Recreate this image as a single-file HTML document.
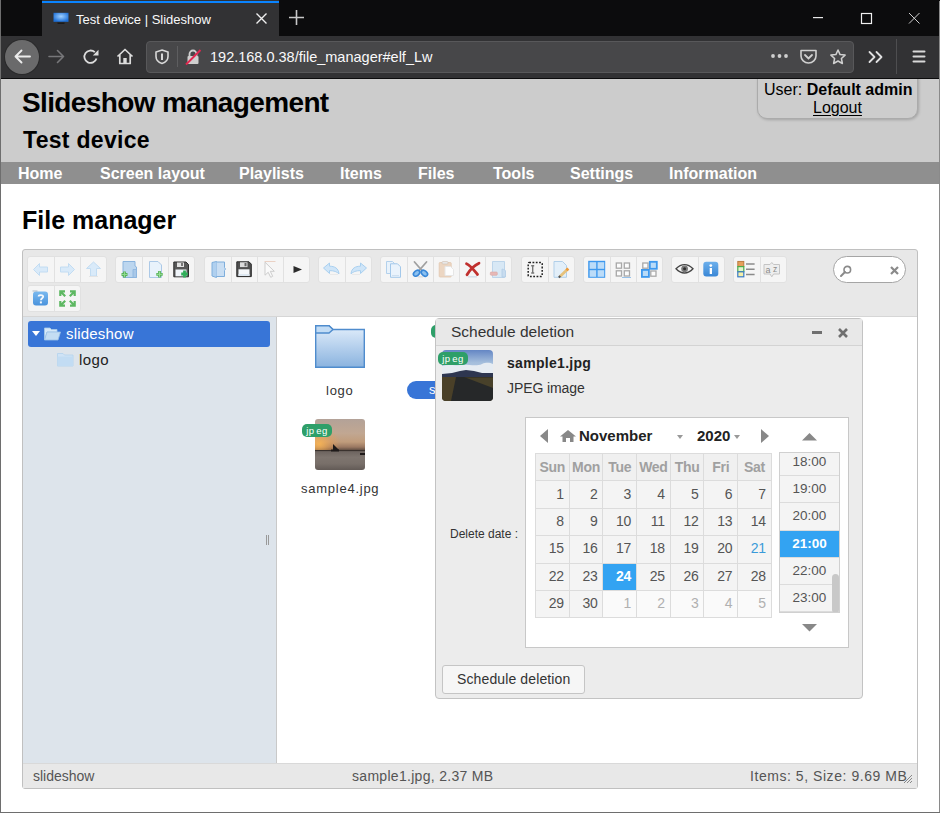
<!DOCTYPE html>
<html><head><meta charset="utf-8">
<style>
*{box-sizing:border-box;}
html,body{margin:0;padding:0;width:940px;height:813px;overflow:hidden;background:#fff;font-family:"Liberation Sans",sans-serif;}
.a{position:absolute;}
svg{position:absolute;overflow:visible;}
#titlebar{left:0;top:0;width:940px;height:36px;background:#0c0c0d;}
#tab{left:42px;top:0;width:237px;height:36px;background:#323234;}
#tabline{left:42px;top:1px;width:237px;height:2px;background:#0a84ff;}
#toolbar{left:0;top:36px;width:940px;height:42px;background:#323234;}
#tbline{left:0;top:78px;width:940px;height:1px;background:#0c0c0d;}
#urlbar{left:146px;top:41px;width:708px;height:32px;background:#474749;border:1px solid #58585a;border-radius:4px;}
.wb{width:1px;background:#6e6e6e;}
#hdr{left:1px;top:79px;width:938px;height:83px;background:#cccccc;}
#nav{left:1px;top:162px;width:938px;height:22px;background:#8f8f8f;}
.nv{position:absolute;top:163px;height:22px;line-height:22px;color:#fff;font-weight:bold;font-size:16px;}
/* elfinder */
#elf{left:22px;top:249px;width:896px;height:540px;border:1px solid #c0c0c0;border-radius:3px;background:#e8e8e8;overflow:hidden;}
#tree{left:23px;top:317px;width:253px;height:446px;background:#dde4eb;}
#tbb{left:23px;top:316px;width:894px;height:1px;background:#d6d6d6;}
#cwd{left:277px;top:317px;width:640px;height:446px;background:#fff;}
#divl{left:276px;top:317px;width:1px;height:446px;background:#c9c9c9;}
#stat{left:23px;top:763px;width:894px;height:25px;background:#e8e8e8;border-top:1px solid #d9d9d9;}
.bs{position:absolute;top:256px;height:27px;background:#f5f5f5;border-radius:3px;border:1px solid #e1e1e1;display:flex;}
.bt{width:26px;height:25px;position:relative;}
.bt+.bt{border-left:1px solid #e1e1e1;}
.bt svg{left:5px;top:4px;}
.bt+.bt svg{left:4px;}
.st{position:absolute;top:768px;font-size:14px;color:#555;line-height:16px;white-space:nowrap;}
/* dialog */
#dlg{left:435px;top:318px;width:428px;height:381px;border:1px solid #c3c3c3;border-radius:4px;background:#ececec;overflow:hidden;}
#dlgh{left:436px;top:319px;width:426px;height:27px;background:#e8e8e8;border-bottom:1px solid #d3d3d3;}
#pick{left:525px;top:417px;width:324px;height:231px;background:#fff;border:1px solid #c8c8c8;}
.cal{position:absolute;left:535px;top:453px;border-collapse:collapse;}
.cal td{border:1px solid #dcdcdc;width:33.7px;height:27.4px;padding:0 5px 2px 0;text-align:right;font-size:14px;letter-spacing:-0.3px;color:#555;background:#f4f4f4;line-height:16px;}
.cal tr.h td{color:#a0a0a0;font-weight:bold;background:#f0f0f0;text-align:center;padding:0 0 1px 0;}
.cal td.o{background:#fafafa;color:#b0b0b0;}
.cal td.sel{background:#33a3f2;color:#fff;font-weight:bold;}
.tr{height:27.2px;border-bottom:1px solid #dcdcdc;background:#f4f4f4;text-align:center;font-size:13.5px;color:#555;line-height:26px;}
.tr.sel{background:#33a3f2;color:#fff;font-weight:bold;}
</style></head>
<body>
<!-- browser chrome -->
<div class="a" id="titlebar"></div>
<div class="a" id="tab"></div>
<div class="a" id="tabline"></div>
<svg style="left:53px;top:12px" width="16" height="13" viewBox="0 0 16 13"><defs><radialGradient id="mon" cx="0.5" cy="0.4" r="0.6"><stop offset="0" stop-color="#9fd0ff"/><stop offset="1" stop-color="#1d6fd6"/></radialGradient></defs><rect x="0.5" y="0.8" width="15" height="9" fill="url(#mon)"/><rect x="4.5" y="10.5" width="7" height="1.5" fill="#1a1a1a"/></svg>
<div class="a" style="left:76px;top:11px;font-size:13px;color:#f9f9fa;line-height:17px;">Test device | Slideshow</div>
<svg style="left:256px;top:13px" width="11" height="11"><path d="M0.5 0.5L10.5 10.5M10.5 0.5L0.5 10.5" stroke="#f0f0f0" stroke-width="1.4"/></svg>
<svg style="left:289px;top:10px" width="15" height="15"><path d="M7.5 0V15M0 7.5H15" stroke="#c8c8c8" stroke-width="1.6"/></svg>
<svg style="left:813px;top:17px" width="11" height="2"><rect x="0" y="0" width="10" height="1.2" fill="#e8e8e8"/></svg>
<svg style="left:861px;top:13px" width="12" height="11"><rect x="0.5" y="0.5" width="10" height="10" fill="none" stroke="#f0f0f0" stroke-width="1.2"/></svg>
<svg style="left:909px;top:13px" width="11" height="11"><path d="M0 0L10.5 10.5M10.5 0L0 10.5" stroke="#d0d0d0" stroke-width="1"/></svg>
<div class="a" id="toolbar"></div>
<div class="a" id="tbline"></div>
<!-- back circle -->
<div class="a" style="left:5px;top:40px;width:34px;height:34px;border-radius:50%;background:#6a6a6b;box-shadow:0 0 0 1px #2a2a2b;"></div>
<svg style="left:14px;top:49px" width="17" height="15"><path d="M16 7.5H1.5M7.5 1.5L1.5 7.5L7.5 13.5" fill="none" stroke="#ececec" stroke-width="1.9" stroke-linecap="round" stroke-linejoin="round"/></svg>
<svg style="left:48px;top:49px" width="17" height="15"><path d="M1 7.5H15.5M9.5 1.5L15.5 7.5L9.5 13.5" fill="none" stroke="#77777a" stroke-width="1.6" stroke-linecap="round" stroke-linejoin="round"/></svg>
<svg style="left:82px;top:49px" width="18" height="16"><path d="M14.5 9.5A6.2 6.2 0 1 1 12.8 3.2" fill="none" stroke="#dcdcdc" stroke-width="1.8"/><path d="M16.5 0.8V6.5H10.8Z" fill="#dcdcdc"/></svg>
<svg style="left:116px;top:48px" width="18" height="17"><path d="M1.5 8.5L9 1.5L16.5 8.5M3.8 6.5V15.5H14.2V6.5" fill="none" stroke="#dcdcdc" stroke-width="1.7" stroke-linejoin="round"/><rect x="7.3" y="10" width="3.4" height="5.5" fill="#dcdcdc"/></svg>
<div class="a" id="urlbar"></div>
<svg style="left:155px;top:49px" width="14" height="15"><path d="M7 1L13 3V7.5C13 11 10 13.5 7 14.5C4 13.5 1 11 1 7.5V3Z" fill="none" stroke="#d8d8d8" stroke-width="1.6"/><path d="M7 4.5V11" stroke="#d8d8d8" stroke-width="2"/></svg>
<div class="a" style="left:177px;top:46px;width:1px;height:21px;background:#5e5e60;"></div>
<svg style="left:185px;top:49px" width="16" height="16"><path d="M4.5 7V5A3.5 3.5 0 0 1 11.5 5V7" fill="none" stroke="#cfcfcf" stroke-width="1.8"/><rect x="2.5" y="7" width="11" height="8" rx="1" fill="#cfcfcf"/><path d="M1 15.5L15.5 1" stroke="#e22850" stroke-width="2"/></svg>
<div class="a" style="left:210px;top:48px;font-size:14.5px;color:#f9f9fa;line-height:18px;">192.168.0.38/file_manager#elf_Lw</div>
<svg style="left:771px;top:54px" width="18" height="4"><circle cx="2" cy="2" r="1.9" fill="#cfcfcf"/><circle cx="8.5" cy="2" r="1.9" fill="#cfcfcf"/><circle cx="15" cy="2" r="1.9" fill="#cfcfcf"/></svg>
<svg style="left:800px;top:49px" width="17" height="15"><path d="M1 1.5H16V7A7.5 7 0 0 1 1 7Z" fill="none" stroke="#d0d0d0" stroke-width="1.6" stroke-linejoin="round"/><path d="M5 6L8.5 9.5L12 6" fill="none" stroke="#d0d0d0" stroke-width="1.8" stroke-linecap="round"/></svg>
<svg style="left:830px;top:49px" width="16" height="16"><path d="M8 1L10.1 5.6L15.1 6.1L11.4 9.5L12.4 14.5L8 12L3.6 14.5L4.6 9.5L0.9 6.1L5.9 5.6Z" fill="none" stroke="#d0d0d0" stroke-width="1.5" stroke-linejoin="round"/></svg>
<svg style="left:868px;top:51px" width="16" height="12"><path d="M1.5 1L6.5 6L1.5 11M8.5 1L13.5 6L8.5 11" fill="none" stroke="#e0e0e0" stroke-width="1.8" stroke-linecap="round" stroke-linejoin="round"/></svg>
<div class="a" style="left:896px;top:39px;width:1px;height:35px;background:#4e4e50;"></div>
<svg style="left:912px;top:50px" width="14" height="13"><path d="M1.5 1.5H12.5M1.5 6.5H12.5M1.5 11.5H12.5" stroke="#d8d8d8" stroke-width="2" stroke-linecap="round"/></svg>

<!-- page header -->
<div class="a" id="hdr"></div>
<div class="a" style="left:22px;top:87px;font-size:28px;letter-spacing:-0.62px;font-weight:bold;color:#000;line-height:32px;">Slideshow management</div>
<div class="a" style="left:23px;top:126px;font-size:23px;letter-spacing:0.3px;font-weight:bold;color:#000;line-height:28px;">Test device</div>
<div class="a" style="left:740px;top:79px;width:199px;height:50px;overflow:hidden;"><div class="a" style="left:17px;top:-10px;width:161px;height:50px;background:#cdcdcd;border:1px solid #ababab;border-radius:10px;box-shadow:1px 1px 3px rgba(0,0,0,0.2);"></div></div>
<div class="a" style="left:764px;top:81px;font-size:16px;color:#000;line-height:18px;white-space:nowrap;">User: <b>Default admin</b></div>
<div class="a" style="left:813px;top:99px;font-size:16px;color:#000;line-height:18px;text-decoration:underline;text-underline-offset:1.5px;">Logout</div>
<div class="a" id="nav"></div>
<div class="nv" style="left:18px">Home</div>
<div class="nv" style="left:100px">Screen layout</div>
<div class="nv" style="left:239px">Playlists</div>
<div class="nv" style="left:340px">Items</div>
<div class="nv" style="left:418px">Files</div>
<div class="nv" style="left:493px">Tools</div>
<div class="nv" style="left:570px">Settings</div>
<div class="nv" style="left:669px">Information</div>

<div class="a" style="left:22px;top:205px;font-size:25px;font-weight:bold;color:#000;line-height:30px;">File manager</div>

<!-- elfinder -->
<div class="a" id="elf"></div>
<div class="a" id="tree"></div>
<div class="a" id="tbb"></div>
<div class="a" id="cwd"></div>
<div class="a" id="divl"></div>
<div class="a" id="stat"></div>
<div class="st" style="left:33px">slideshow</div>
<div class="st" style="left:352px;letter-spacing:0.3px">sample1.jpg, 2.37 MB</div>
<div class="st" style="left:750px;letter-spacing:0.55px">Items: 5, Size: 9.69 MB</div>
<svg style="left:903px;top:774px" width="10" height="10"><path d="M9 1L1 9M9 4L4 9M9 7L7 9" stroke="#888" stroke-width="1"/></svg>

<!--TOOLBAR-->
<div class="bs" style="left:27px">
 <div class="bt"><svg width="16" height="16"><path d="M0.5 8.5L6.5 2.5V6H14.5V11H6.5V14.5Z" fill="#d9eaf9" stroke="#c2dcf2" stroke-width="1" stroke-linejoin="round"/></svg></div>
 <div class="bt"><svg width="16" height="16"><path d="M15.5 8.5L9.5 2.5V6H1.5V11H9.5V14.5Z" fill="#d9eaf9" stroke="#c2dcf2" stroke-width="1" stroke-linejoin="round"/></svg></div>
 <div class="bt"><svg width="16" height="16"><path d="M8.5 1L15.5 7.5H11.5V15H5.5V7.5H1.5Z" fill="#d9eaf9" stroke="#c2dcf2" stroke-width="1" stroke-linejoin="round"/><rect x="4" y="15" width="9" height="1" fill="#e4e4e4"/></svg></div>
</div>
<div class="bs" style="left:115.3px">
 <div class="bt"><svg width="16" height="16"><path d="M2 0.5H14V5L15.5 6V16.5H2Z" fill="#bcd6ef" stroke="#8bb4de" stroke-width="1"/><path d="M12 8.5H15.5V16.5H12Z" fill="#a9c8e8" stroke="#8bb4de" stroke-width="0.8"/><path d="M3.5 10.5V16.5M0.5 13.5H6.5" stroke="#58b358" stroke-width="2.8"/><path d="M3.5 11V16M1 13.5H6" stroke="#8fd88f" stroke-width="1"/></svg></div>
 <div class="bt"><svg width="16" height="16"><path d="M2.5 0.5H11L14.5 4V16.5H2.5Z" fill="#e8f2fb" stroke="#acc9e7" stroke-width="1"/><path d="M12.5 10V16.5M9.3 13.3H15.7" stroke="#58b358" stroke-width="2.8"/><path d="M12.5 10.5V16M9.8 13.3H15.2" stroke="#9ade9a" stroke-width="1"/></svg></div>
 <div class="bt"><svg width="16" height="16"><path d="M0.8 1H13L15.5 3.5V15.8H0.8Z" fill="#585858" stroke="#2e2e2e" stroke-width="1"/><rect x="4" y="1.5" width="7" height="4.5" fill="#e2e2e2"/><rect x="8" y="2" width="2" height="3" fill="#777"/><rect x="2.5" y="8.5" width="11" height="6.8" fill="#f0f5fa"/><path d="M11.5 9.5V16.5M8.2 13H14.8" stroke="#31ae5a" stroke-width="2.8"/></svg></div>
</div>
<div class="bs" style="left:203.6px">
 <div class="bt"><svg width="16" height="16"><path d="M2 1.5L6.5 0.5V16.5L2 15Z" fill="#b0d0ef" stroke="#7eaedc" stroke-width="1"/><path d="M6.5 1H14.5V6.5C15.5 7 15.5 9 14.5 9.5V15.5H6.5" fill="#c9def3" stroke="#7eaedc" stroke-width="1"/></svg></div>
 <div class="bt"><svg width="16" height="16"><path d="M0.8 0.8H13L15.3 3.1V15.6H0.8Z" fill="#505050" stroke="#2a2a2a" stroke-width="1"/><rect x="4" y="1.3" width="7.5" height="4.8" fill="#dcdcdc"/><rect x="8.5" y="2" width="2" height="3.2" fill="#666"/><rect x="2.5" y="8.3" width="11" height="6.6" fill="#f4f7fa"/><rect x="2.5" y="13" width="11" height="1.9" fill="#dde8f2"/></svg></div>
 <div class="bt"><svg width="16" height="16"><path d="M3 1.2V14.2L6.2 11.3L8.7 16.3L10.7 15.3L8.3 10.3H12.3Z" fill="#fafafa" stroke="#cdcdcd" stroke-width="1" stroke-linejoin="round"/><rect x="2.5" y="0" width="11" height="0.8" fill="#e8c8b8"/></svg></div>
 <div class="bt"><svg width="16" height="16"><path d="M5.5 5L14 8.5L5.5 12Z" fill="#2c2c2c"/></svg></div>
</div>
<div class="bs" style="left:317.9px">
 <div class="bt"><svg width="16" height="16"><path d="M-0.5 7L5.5 2V5.2C10.5 5.2 14.5 7.2 15 12.8C13 10.8 10 9.6 5.5 9.6V12.5Z" fill="#cfe5f8" stroke="#a9d0f0" stroke-width="1" stroke-linejoin="round"/><rect x="6" y="13" width="8" height="0.8" fill="#e6e6e6"/></svg></div>
 <div class="bt"><svg width="16" height="16"><path d="M16.5 7L10.5 2V5.2C5.5 5.2 1.5 7.2 1 12.8C3 10.8 6 9.6 10.5 9.6V12.5Z" fill="#cfe5f8" stroke="#a9d0f0" stroke-width="1" stroke-linejoin="round"/><rect x="2" y="13" width="8" height="0.8" fill="#e6e6e6"/></svg></div>
</div>
<div class="bs" style="left:380.2px">
 <div class="bt"><svg width="16" height="16"><path d="M0.5 0.5H6.5L8.5 2.5V12.5H0.5Z" fill="#e8f2fb" stroke="#b3d1ec" stroke-width="1"/><path d="M4.5 2.8H11.5L14.5 5.8V16.3H4.5Z" fill="#eaf3fc" stroke="#a3c8ea" stroke-width="1"/><path d="M6 14.5H13" stroke="#cfe0f0" stroke-width="1"/></svg></div>
 <div class="bt"><svg width="16" height="16"><path d="M2.5 1L9.5 9M14.5 1L7.5 9" stroke="#a0a0a0" stroke-width="1.8" stroke-linecap="round"/><ellipse cx="4.6" cy="12.2" rx="3.6" ry="2.4" transform="rotate(-40 4.6 12.2)" fill="#8cc1f0" stroke="#3a88d8" stroke-width="1.6"/><ellipse cx="12.4" cy="12.2" rx="3.6" ry="2.4" transform="rotate(40 12.4 12.2)" fill="#8cc1f0" stroke="#3a88d8" stroke-width="1.6"/><rect x="6" y="15.5" width="5" height="0.8" fill="#ccc"/></svg></div>
 <div class="bt"><svg width="16" height="16"><rect x="1.2" y="1.5" width="12" height="14.5" rx="0.8" fill="#ecd6c2" stroke="#e2c8b0" stroke-width="0.8"/><rect x="4" y="0.5" width="6" height="2.5" rx="1" fill="#e8e8e8" stroke="#d0c0b0" stroke-width="0.6"/><path d="M7 5.5H12.5L15.5 8.5V14.5H7Z" fill="#fdfdfd" stroke="#e6e6e6" stroke-width="1"/></svg></div>
 <div class="bt"><svg width="16" height="16"><path d="M2.5 2.8C6.5 4.5 9 8 13.5 13.5M15 2.2C10 4.5 6 8.5 3 13.8" fill="none" stroke="#c0302e" stroke-width="2.8" stroke-linecap="round"/><rect x="4" y="15.5" width="9" height="0.8" fill="#b8cce0"/></svg></div>
 <div class="bt"><svg width="16" height="16"><path d="M2.5 0.5H14.5V16.5H2.5Z" fill="#d8e8f5" stroke="#bdd5ea" stroke-width="1"/><path d="M12 8C14 8.5 15.5 9 15.5 10V16H12Z" fill="#c8dcef" stroke="#b0cce6" stroke-width="0.8"/><rect x="0.3" y="11" width="7" height="3.3" rx="1" fill="#e6b8b6" stroke="#d9a4a2" stroke-width="0.6"/></svg></div>
</div>
<div class="bs" style="left:520.5px">
 <div class="bt"><svg width="16" height="16"><rect x="1.2" y="1.5" width="14" height="14" rx="1" fill="none" stroke="#222" stroke-width="1.5" stroke-dasharray="1.8 1.5"/><path d="M4.2 4.8H7.2M5.7 4.8V12M4.2 12H7.2" stroke="#777" stroke-width="1.4"/></svg></div>
 <div class="bt"><svg width="16" height="16"><path d="M1 0.5H9.5L13.5 4.5V16.3H1Z" fill="#e3eff9" stroke="#b1cfe9" stroke-width="1"/><path d="M7 15.5L14.8 8" stroke="#e6c27c" stroke-width="2.8"/><path d="M13.5 9.2L15.3 7.5" stroke="#ee9a3a" stroke-width="2.8"/><path d="M5.8 16.5L7.3 15" stroke="#555" stroke-width="2"/></svg></div>
</div>
<div class="bs" style="left:582.8px">
 <div class="bt"><svg width="16" height="16"><rect x="-0.8" y="-0.2" width="17" height="17" fill="#3d98ee"/><rect x="0.6" y="1.2" width="6.6" height="6.6" fill="#bcdcf8"/><rect x="8.6" y="1.2" width="6.6" height="6.6" fill="#bcdcf8"/><rect x="0.6" y="9.2" width="6.6" height="6.6" fill="#bcdcf8"/><rect x="8.6" y="9.2" width="6.6" height="6.6" fill="#bcdcf8"/></svg></div>
 <div class="bt"><svg width="16" height="16"><g fill="#fcfcfc" stroke="#a8a8a8" stroke-width="1.3"><rect x="1.3" y="2" width="5.2" height="5.2"/><rect x="9.3" y="2" width="5.2" height="5.2"/><rect x="1.3" y="9.8" width="5.2" height="5.2"/><rect x="9.3" y="9.8" width="5.2" height="5.2"/></g><rect x="7" y="16" width="9" height="0.8" fill="#7fb5e6"/></svg></div>
 <div class="bt"><svg width="16" height="16"><g fill="#fcfcfc" stroke="#a8a8a8" stroke-width="1.3"><rect x="1.8" y="2" width="5.2" height="5.2"/><rect x="9.8" y="10" width="5.2" height="5.2"/></g><g fill="#b9dbf8" stroke="#3d98ee" stroke-width="1.8"><rect x="8.8" y="0.8" width="7" height="7"/><rect x="0.9" y="8.9" width="7" height="7"/></g></svg></div>
</div>
<div class="bs" style="left:671.1px">
 <div class="bt"><svg width="16" height="16"><path d="M-1 7.8C2 4.6 5 3.6 7.5 3.6S13 4.6 16 7.8C13 11 10 12 7.5 12S2 11 -1 7.8Z" fill="#f4f4f4" stroke="#444" stroke-width="1.3"/><circle cx="7.6" cy="7.8" r="3.4" fill="#7a7a7a"/><circle cx="7.6" cy="7.8" r="1.5" fill="#2e2e2e"/></svg></div>
 <div class="bt"><svg width="16" height="16"><defs><linearGradient id="ig" x1="0" y1="0" x2="0" y2="1"><stop offset="0" stop-color="#6db0ec"/><stop offset="1" stop-color="#3a87d6"/></linearGradient></defs><rect x="0.3" y="0.8" width="15" height="14.6" rx="3" fill="url(#ig)"/><circle cx="7.8" cy="4.6" r="1.4" fill="#fff"/><rect x="6.7" y="7" width="2.3" height="6" fill="#fff"/></svg></div>
</div>
<div class="bs" style="left:733.4px">
 <div class="bt"><svg width="16" height="16"><rect x="-1.2" y="0.4" width="6" height="5" fill="#e6a05a" stroke="#b8763a" stroke-width="0.9"/><rect x="-1.2" y="5.6" width="6" height="5" fill="#e4f4cc" stroke="#4caa4c" stroke-width="1.2"/><rect x="-1.2" y="10.8" width="6" height="5" fill="#f6f0a8" stroke="#3a7cc8" stroke-width="1.2"/><path d="M7 3H15.6M7 8.2H15.6M7 13.5H15.6" stroke="#8a8a8a" stroke-width="1.4"/></svg></div>
 <div class="bt"><svg width="16" height="16"><path d="M-1 3.5H5L6.8 1.5L8.6 3.5H14.5V13H8.6L6.8 15.8L5 13H-1Z" fill="#eeeeee" stroke="#c4c4c4" stroke-width="1"/><text x="0.5" y="11.5" font-family="Liberation Sans" font-size="9" fill="#8a8a8a">a</text><text x="8" y="10.8" font-family="Liberation Sans" font-size="8.5" fill="#8a8a8a">z</text></svg></div>
</div>
<div class="bs" style="left:27px;top:285px">
 <div class="bt"><svg width="16" height="16"><defs><linearGradient id="hg" x1="0" y1="0" x2="0" y2="1"><stop offset="0" stop-color="#7ab9ef"/><stop offset="1" stop-color="#4a93dc"/></linearGradient></defs><rect x="0" y="1.5" width="15" height="14" rx="3" fill="url(#hg)"/><rect x="-0.5" y="0.6" width="5" height="0.8" fill="#9ab"/><path d="M5.6 6.4C5.6 4.6 10.2 4.6 10.2 6.6C10.2 8.2 7.9 8.3 7.9 10.2" fill="none" stroke="#f4f8fc" stroke-width="1.8"/><rect x="6.9" y="11.4" width="2" height="2" fill="#f4f8fc"/></svg></div>
 <div class="bt"><svg width="18" height="18"><g fill="none" stroke="#5db862" stroke-width="2.2" stroke-linecap="butt"><path d="M1.3 6V1.3H6M1.8 1.8L6.2 6.2"/><path d="M15.7 6V1.3H11M15.2 1.8L10.8 6.2"/><path d="M1.3 11V15.7H6M1.8 15.2L6.2 10.8"/><path d="M15.7 11V15.7H11M15.2 15.2L10.8 10.8"/></g></svg></div>
</div>
<div class="a" style="left:833px;top:256px;width:73px;height:27px;border:1px solid #a5a5a5;border-radius:14px;background:#fff;"></div>
<svg style="left:840px;top:265px" width="12" height="12"><circle cx="7.3" cy="4.7" r="3.3" fill="none" stroke="#8a8a8a" stroke-width="1.6"/><path d="M5 7L1 11" stroke="#8a8a8a" stroke-width="2" stroke-linecap="round"/></svg>
<svg style="left:890px;top:266px" width="9" height="9"><path d="M1 1L8 8M8 1L1 8" stroke="#8a8a8a" stroke-width="2.2"/></svg>

<!--TREE-->
<div class="a" style="left:28px;top:321px;width:242px;height:26px;background:#3875d7;border-radius:3px;"></div>
<svg style="left:32px;top:331px" width="9" height="6"><path d="M0 0H8L4 5Z" fill="#fff"/></svg>
<svg style="left:44px;top:327px" width="17" height="14"><path d="M0.5 1H6L7.5 2.5H13V5H3L0.5 13Z" fill="#d6e8f8" stroke="#a9cbe9" stroke-width="0.8"/><path d="M3 5H16.5L14 13H0.5Z" fill="#c4ddf3" stroke="#9cc2e6" stroke-width="0.8"/></svg>
<div class="a" style="left:66px;top:325px;font-size:15px;color:#fff;line-height:17px;letter-spacing:0.2px;">slideshow</div>
<svg style="left:57px;top:352px" width="17" height="15"><path d="M0.5 1.5H6L7.5 3H16V14H0.5Z" fill="#cfe3f6" stroke="#b2d2ee" stroke-width="0.8"/><path d="M0.5 4.5H16V14H0.5Z" fill="#c2dcf3"/></svg>
<div class="a" style="left:79px;top:351px;font-size:15px;color:#222;line-height:17px;letter-spacing:0.4px;">logo</div>
<div class="a" style="left:266px;top:535px;width:1px;height:10px;background:#999;"></div>
<div class="a" style="left:268px;top:535px;width:1px;height:10px;background:#999;"></div>


<!--CWD-->
<svg style="left:315px;top:325px" width="51" height="44"><defs><linearGradient id="fg" x1="0" y1="0" x2="0" y2="1"><stop offset="0" stop-color="#e2eefb"/><stop offset="1" stop-color="#8ab3df"/></linearGradient></defs><path d="M0.7 0.7H14L18 4.5H49.3V42.3H0.7Z" fill="url(#fg)" stroke="#4f8ccd" stroke-width="1.4" stroke-linejoin="miter"/><path d="M0.7 0.7H14L18 4.5L14 8H0.7Z" fill="#c2dcf5" stroke="#4f8ccd" stroke-width="1.4"/></svg>
<div class="a" style="left:326px;top:383px;font-size:13px;color:#333;letter-spacing:0.75px;line-height:16px;">logo</div>
<div class="a" style="left:431px;top:325px;width:12px;height:13px;background:#2e9f69;border-radius:5px;"></div>
<div class="a" style="left:407px;top:381px;width:40px;height:18px;background:#3875d7;border-radius:9px;"></div>
<div class="a" style="left:429px;top:382px;font-size:13px;color:#fff;line-height:16px;">s</div>
<div class="a" style="left:315px;top:419px;width:50px;height:51px;border-radius:3px;overflow:hidden;background:linear-gradient(180deg,#b3a298 0%,#c1a792 28%,#c09c7c 45%,#9a7862 55%,#6a5548 60%,#3c3430 62%,#6e6560 64%,#7e756f 75%,#786f69 88%,#625a56 100%);">
 <div style="position:absolute;left:0;top:0;width:50px;height:31px;overflow:hidden;"><div style="position:absolute;left:-18px;top:8px;width:44px;height:34px;border-radius:50%;background:radial-gradient(closest-side,rgba(248,180,84,0.95),rgba(236,160,80,0.45) 55%,rgba(230,150,80,0));"></div></div>
 <div style="position:absolute;left:0;top:31px;width:50px;height:1px;background:#3a322e;"></div>
 <svg style="left:16px;top:25px" width="9" height="8"><path d="M2 0L8 6H2Z" fill="#1e1a1a"/><rect x="0" y="5.5" width="8" height="2" fill="#1e1a1a"/></svg>
 <div style="position:absolute;left:45px;top:34px;width:5px;height:2px;background:#1e1a1a;"></div>
</div>
<div class="a" style="left:302px;top:424px;width:30px;height:13px;background:#2e9f69;border-radius:5px;color:#fff;font-size:9.5px;line-height:14px;text-align:center;letter-spacing:0.5px;">jp<span style="margin-left:1.5px">eg</span></div>
<div class="a" style="left:301px;top:481px;font-size:13px;color:#333;letter-spacing:0.75px;line-height:16px;">sample4.jpg</div>


<!--DIALOG-->
<div class="a" id="dlg"></div>
<div class="a" id="dlgh"></div>
<div class="a" style="left:451px;top:323px;font-size:15.5px;color:#333;line-height:17px;">Schedule deletion</div>
<div class="a" style="left:812px;top:331px;width:10px;height:3px;background:#6f6f6f;"></div>
<svg style="left:838px;top:328px" width="10" height="10"><path d="M1 1L9 9M9 1L1 9" stroke="#6f6f6f" stroke-width="2.6"/></svg>
<div class="a" style="left:442px;top:350px;width:51px;height:51px;border-radius:4px;overflow:hidden;">
<svg style="left:0;top:0" width="51" height="51"><defs><linearGradient id="sky1" x1="0" y1="0" x2="0" y2="1"><stop offset="0" stop-color="#6486c4"/><stop offset="0.45" stop-color="#a4bedc"/><stop offset="1" stop-color="#c4d4e4"/></linearGradient></defs>
<rect width="51" height="28" fill="url(#sky1)"/>
<path d="M0 16C6 14 12 16 18 15C26 14 34 17 40 14C45 12 48 13 51 14V25H0Z" fill="#e6ecf2"/>
<path d="M0 24L10 23L18 21L24 20L32 21L40 23L51 23V28H0Z" fill="#2e3650"/>
<rect y="27" width="51" height="24" fill="#3a3524"/>
<path d="M0 28H51V40L30 34Z" fill="#48412a"/>
<path d="M13 27L22 27L51 38V51H8Z" fill="#262829"/>
<path d="M0 27H14L9 51H0Z" fill="#4a4028"/>
</svg></div>
<div class="a" style="left:438px;top:352px;width:30px;height:13px;background:#2e9f69;border-radius:5px;color:#fff;font-size:9.5px;line-height:14px;text-align:center;letter-spacing:0.5px;">jp<span style="margin-left:1.5px">eg</span></div>
<div class="a" style="left:507px;top:355px;font-size:14px;font-weight:bold;color:#222;line-height:16px;letter-spacing:0.3px;">sample1.jpg</div>
<div class="a" style="left:507px;top:380px;font-size:14px;color:#333;line-height:16px;letter-spacing:-0.1px;">JPEG image</div>
<div class="a" style="left:450px;top:527px;font-size:12px;color:#333;line-height:14px;">Delete date :</div>
<div class="a" id="pick"></div>
<svg style="left:540px;top:429px" width="9" height="15"><path d="M8 0V14L0 7Z" fill="#888"/></svg>
<svg style="left:560px;top:430px" width="16" height="12"><path d="M0 6.5L8 0L16 6.5H13.5V12H10V8H6V12H2.5V6.5Z" fill="#888"/></svg>
<div class="a" style="left:579px;top:428px;font-size:15px;font-weight:bold;color:#222;line-height:16px;">November</div>
<svg style="left:677px;top:435px" width="7" height="5"><path d="M0 0H6L3 4Z" fill="#999"/></svg>
<div class="a" style="left:697px;top:428px;font-size:15px;font-weight:bold;color:#222;line-height:16px;">2020</div>
<svg style="left:734px;top:435px" width="7" height="5"><path d="M0 0H6L3 4Z" fill="#999"/></svg>
<svg style="left:761px;top:429px" width="9" height="15"><path d="M0 0V14L8 7Z" fill="#888"/></svg>
<svg style="left:802px;top:433px" width="16" height="8"><path d="M0 7.5L7.5 0L15 7.5Z" fill="#888"/></svg>
<svg style="left:802px;top:624px" width="16" height="8"><path d="M0 0L7.5 7.5L15 0Z" fill="#888"/></svg>
<table class="cal">
<tr class="h"><td>Sun</td><td>Mon</td><td>Tue</td><td>Wed</td><td>Thu</td><td>Fri</td><td>Sat</td></tr>
<tr><td>1</td><td>2</td><td>3</td><td>4</td><td>5</td><td>6</td><td>7</td></tr>
<tr><td>8</td><td>9</td><td>10</td><td>11</td><td>12</td><td>13</td><td>14</td></tr>
<tr><td>15</td><td>16</td><td>17</td><td>18</td><td>19</td><td>20</td><td style="color:#3a9ad9">21</td></tr>
<tr><td>22</td><td>23</td><td class="sel">24</td><td>25</td><td>26</td><td>27</td><td>28</td></tr>
<tr><td>29</td><td>30</td><td class="o">1</td><td class="o">2</td><td class="o">3</td><td class="o">4</td><td class="o">5</td></tr>
</table>
<div class="a" style="left:779px;top:452px;width:61px;height:161px;border:1px solid #d0d0d0;overflow:hidden;background:#f4f4f4;">
 <div style="position:absolute;left:0;top:-4px;width:59px;">
  <div class="tr">18:00</div><div class="tr">19:00</div><div class="tr">20:00</div><div class="tr sel">21:00</div><div class="tr">22:00</div><div class="tr">23:00</div>
 </div>
 <div style="position:absolute;left:52px;top:121px;width:7px;height:39px;border-radius:4px;background:#c8c8c8;"></div>
</div>
<div class="a" style="left:442px;top:665px;width:143px;height:29px;border:1px solid #c5c5c5;border-radius:3px;background:#f6f6f6;"></div>
<div class="a" style="left:457px;top:671px;font-size:14px;color:#333;line-height:16px;letter-spacing:0.12px;">Schedule deletion</div>


<div class="a wb" style="top:0;height:813px;left:0;"></div>
<div class="a wb" style="top:1px;height:812px;left:939px;background:#8a8a8a"></div>
<div class="a" style="top:812px;height:1px;left:0;width:940px;background:#6e6e6e;"></div>
</body></html>
